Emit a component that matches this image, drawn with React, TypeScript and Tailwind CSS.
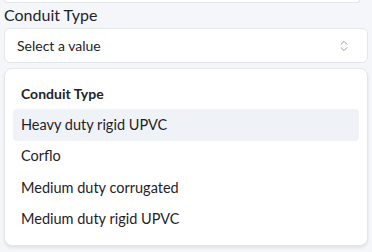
import { ChevronsUpDown } from "lucide-react";

const options = [
  "Heavy duty rigid UPVC",
  "Corflo",
  "Medium duty corrugated",
  "Medium duty rigid UPVC",
];

const App = () => {
  return (
    <div
      className="h-[252px] w-full overflow-hidden bg-[#f4f6f9] px-[4px] text-[#1f2328]"
      style={{ fontFamily: "Lato, 'Noto Sans', sans-serif" }}
    >
      {/* bottom edge of the previous field */}
      <div className="h-[3px] mr-[8px] rounded-b-md border-x border-b border-[#e3e6eb] bg-white" />

      <label className="block mt-[1px] text-[16px] leading-[22px]">Conduit Type</label>

      {/* Trigger */}
      <button
        type="button"
        className="mt-[2px] flex h-[35px] w-full items-center justify-between rounded-md border border-[#e3e6eb] bg-white pl-[12px] pr-[16px] text-[14px]"
      >
        <span>Select a value</span>
        <ChevronsUpDown size={14} strokeWidth={1.5} className="text-[#8a9099]" />
      </button>

      {/* Dropdown */}
      <div className="mt-[5px] rounded-lg border border-[#e3e6eb] bg-white p-[8px] pb-[10px] shadow-[0_2px_3px_rgba(0,0,0,0.08)]">
        <div className="flex h-[32px] items-center px-[8px] text-[14px] font-bold">
          Conduit Type
        </div>
        {options.map((o, i) => (
          <div
            key={o}
            className={
              "flex h-[31.5px] items-center rounded-sm px-[8px] text-[14.5px] " +
              (i === 0 ? "bg-[#eff2f7]" : "")
            }
          >
            {o}
          </div>
        ))}
      </div>
    </div>
  );
};

export default App;
